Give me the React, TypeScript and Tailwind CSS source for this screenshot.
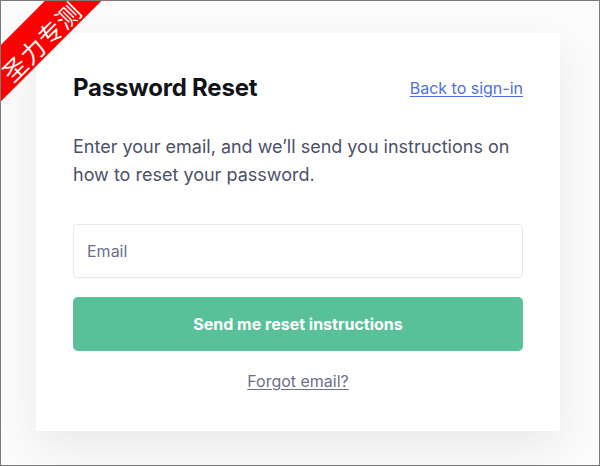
export default function App() {
  return (
    <div
      className="relative w-[600px] h-[466px] overflow-hidden border border-[#7a7a7a] bg-[#fbfbfb]"
      style={{ fontFamily: "Inter, 'Noto Sans', sans-serif" }}
    >
      {/* corner ribbon */}
      <div className="absolute left-[-74px] top-[16px] w-[220px] h-[40px] -rotate-45 bg-[#ff0000] flex items-center justify-center z-10">
        <span
          className="text-white text-[24px] leading-none tracking-[1px] translate-y-[6px]"
          style={{ fontFamily: "'Noto Sans CJK SC', sans-serif" }}
        >
          圣力专测
        </span>
      </div>

      <div className="pt-[32px] pl-[35px]">
        <div className="w-[524px] h-[398px] bg-white px-[37px] pt-[41px] shadow-[0_16px_40px_rgba(0,0,0,0.07)]">
          <div className="flex items-center justify-between h-[28px]">
            <h1 className="text-[24px] font-bold text-[#111318] tracking-[-0.2px]">
              Password Reset
            </h1>
            <a href="#" className="text-[16px] text-[#4f70dc] underline underline-offset-2">
              Back to sign-in
            </a>
          </div>

          <p className="mt-[31px] text-[18px] leading-[28px] text-[#4b5068]">
            Enter your email, and we’ll send you instructions on how to reset your password.
          </p>

          <input
            type="text"
            placeholder="Email"
            className="mt-[35px] w-full h-[54px] rounded-[4px] border border-[#e6e8f2] px-[13px] text-[16px] placeholder:text-[#6c7088] outline-none"
          />

          <button className="mt-[19px] w-full h-[54px] rounded-[5px] bg-[#58c19a] text-white text-[16px] font-bold">
            Send me reset instructions
          </button>

          <div className="mt-[18px] text-center leading-[24px]">
            <a href="#" className="text-[16px] text-[#6c7088] underline underline-offset-2">
              Forgot email?
            </a>
          </div>
        </div>
      </div>
    </div>
  );
}
